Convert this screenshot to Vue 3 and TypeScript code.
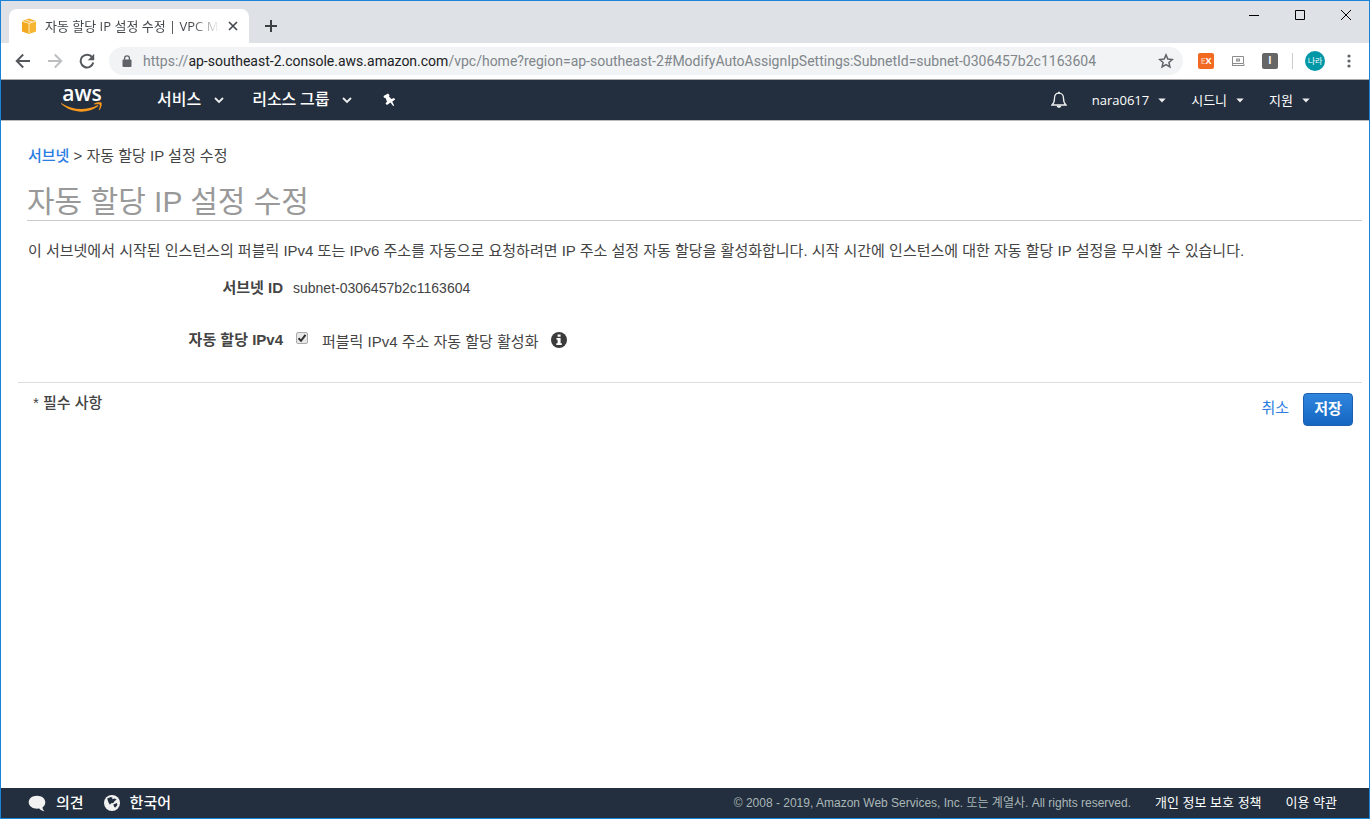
<script setup lang="ts">
import { ref } from 'vue'

interface Menu {
  label: string
}

const pageTitle = '자동 할당 IP 설정 수정'
const subnetId = 'subnet-0306457b2c1163604'
const autoAssign = ref(true)
const mainMenus: Menu[] = [{ label: '서비스' }, { label: '리소스 그룹' }]
const accountMenus: Menu[] = [{ label: 'nara0617' }, { label: '시드니' }, { label: '지원' }]
</script>

<template>
  <div class="window">
    <div class="tabstrip">
      <div class="tab">
        <svg class="favicon" width="16" height="16" viewBox="0 0 16 16" aria-hidden="true">
          <path d="M1 3.2 8 5.4V16L1 13.6z" fill="#f2a81f" />
          <path d="M15 3.2 8 5.4V16l7-2.4z" fill="#f6b532" />
          <path d="M1 3 8 .6 15 3 8 5.2z" fill="#f3b02c" />
          <path d="M1.2 3.2 8 5.3l6.8-2.1M8 5.3V15.6M4.6 1.9l6.9 2.2" stroke="#fde9bd" stroke-width="1" fill="none" />
        </svg>
        <span class="tab-title">{{ pageTitle }} | VPC Ma</span>
        <button class="plain" aria-label="탭 닫기">
          <svg width="10" height="10" viewBox="0 0 10 10"><path d="M1 1l8 8M9 1l-8 8" stroke="#45494d" stroke-width="1.7" /></svg>
        </button>
      </div>
      <button class="plain newtab" aria-label="새 탭">
        <svg width="14" height="14" viewBox="0 0 14 14"><path d="M7 1v12M1 7h12" stroke="#3c4043" stroke-width="2" /></svg>
      </button>
      <div class="window-controls">
        <button class="plain" aria-label="최소화">
          <svg width="12" height="12" viewBox="0 0 12 12"><path d="M1 6.5h10" stroke="#000" /></svg>
        </button>
        <button class="plain" aria-label="최대화">
          <svg width="12" height="12" viewBox="0 0 12 12"><path d="M1.5 1.5h9v9h-9z" stroke="#000" fill="none" /></svg>
        </button>
        <button class="plain" aria-label="닫기">
          <svg width="12" height="12" viewBox="0 0 12 12"><path d="M1 1l10 10M11 1L1 11" stroke="#000" /></svg>
        </button>
      </div>
    </div>

    <div class="toolbar">
      <button class="plain" aria-label="뒤로">
        <svg width="16" height="16" viewBox="0 0 16 16"><path d="M15 8H2M8.2 1.5 1.7 8l6.5 6.5" stroke="#54585d" stroke-width="1.9" fill="none" /></svg>
      </button>
      <button class="plain" aria-label="앞으로">
        <svg width="16" height="16" viewBox="0 0 16 16"><path d="M1 8h13M7.8 1.5 14.3 8l-6.5 6.5" stroke="#bcbec0" stroke-width="1.9" fill="none" /></svg>
      </button>
      <button class="plain" aria-label="새로고침">
        <svg width="16" height="16" viewBox="0 0 16 16">
          <path d="M13.2 4.2A6.4 6.4 0 1 0 14.3 9.6" stroke="#54585d" stroke-width="2" fill="none" />
          <path d="M15.2.8v6.4H8.8z" fill="#54585d" />
        </svg>
      </button>
      <div class="omnibox">
        <svg width="10" height="13" viewBox="0 0 10 13" aria-hidden="true">
          <rect x="0.5" y="4.5" width="9" height="7.5" rx="1" fill="#5f6368" />
          <path d="M2.6 5V3.3a2.4 2.4 0 0 1 4.8 0V5" stroke="#5f6368" stroke-width="1.3" fill="none" />
        </svg>
        <span class="url">https://<b>ap-southeast-2.console.aws.amazon.com</b>/vpc/home?region=ap-southeast-2#ModifyAutoAssignIpSettings:SubnetId=subnet-0306457b2c1163604</span>
        <button class="plain" aria-label="북마크">
          <svg width="16" height="16" viewBox="0 0 16 16"><path d="M8 1.9l1.8 4.2 4.5.4-3.4 3 1 4.4L8 11.6l-3.9 2.3 1-4.4-3.4-3 4.5-.4z" stroke="#5f6368" stroke-width="1.5" fill="none" /></svg>
        </button>
      </div>
      <div class="extensions">
        <button class="plain ext ext-orange"><i>E</i>X</button>
        <button class="plain ext" aria-label="화면 확장 프로그램">
          <svg width="14" height="12" viewBox="0 0 14 12">
            <path d="M1.5 1.5h11v7h-11zM1 10.5h12V8.8M1.5 8v3" stroke="#8b8b8b" fill="none" />
            <path d="M5 3.5h4v3H5z" fill="#8b8b8b" /><path d="M5.5 4l1.5 1.4L8.5 4" stroke="#fff" stroke-width=".6" fill="none" />
          </svg>
        </button>
        <button class="plain ext ext-gray">I</button>
        <span class="divider"></span>
        <button class="plain avatar">나라</button>
        <button class="plain ext" aria-label="메뉴">
          <svg width="4" height="14" viewBox="0 0 4 14" fill="#5f6368"><circle cx="2" cy="2" r="1.6" /><circle cx="2" cy="7" r="1.6" /><circle cx="2" cy="12" r="1.6" /></svg>
        </button>
      </div>
    </div>

    <header class="navbar">
      <a class="logo" href="#" aria-label="AWS">
        <span>aws</span>
        <svg width="42" height="11" viewBox="0 0 42 11" aria-hidden="true">
          <path d="M.6 1.2C10.5 8 25 9 36.3 3.3c1-.5 1.5.4.8 1C28 11.5 11 12 .3 2.1c-.6-.5-.2-1.2.3-.9z" fill="#f8981d" />
          <path d="M33.2 1.5c2.5-1.5 6.5-1.5 7.2-.8.8.8.1 5.3-2 7.4-.4.4-.8.2-.6-.3.6-1.5 1.5-4.3 1-5-.6-.7-3.5-.5-5.1-.4-.6.1-.9-.6-.5-.9z" fill="#f8981d" />
        </svg>
      </a>
      <nav class="main-menu">
        <button v-for="menu in mainMenus" :key="menu.label" class="plain menu-button">
          <span>{{ menu.label }}</span>
          <svg width="10" height="8" viewBox="0 0 10 8"><path d="M1 2l4 4 4-4" stroke="#eee" stroke-width="1.8" fill="none" /></svg>
        </button>
        <button class="plain" aria-label="바로 가기 고정">
          <svg width="18" height="14" viewBox="-3 0 18 14"><path d="M.5 3 5 .5 6.5 2 6 3.5 8.5 6 11 5l1.200 1.500L9.300 8.500l1.800 4-1 .5-2.600-3.500L4 12l-1.500-1.500L4 8.500 2.500 5 1 4.800z" fill="#fff" /></svg>
        </button>
      </nav>
      <div class="account-menu">
        <button class="plain" aria-label="알림">
          <svg width="16" height="18" viewBox="0 0 16 18">
            <path d="M8 2.2c-3 0-4.5 2.2-4.5 5 0 3.5-.8 5.3-2.5 6.8h14c-1.7-1.5-2.5-3.3-2.5-6.8 0-2.8-1.5-5-4.5-5z" stroke="#eee" stroke-width="1.3" fill="none" />
            <path d="M7.1.7h1.8v2H7.1zM5.7 14.5h4.6c0 1.5-1 2.3-2.3 2.3s-2.3-.8-2.3-2.3z" fill="#eee" />
          </svg>
        </button>
        <button v-for="menu in accountMenus" :key="menu.label" class="plain menu-button small">
          <span>{{ menu.label }}</span>
          <svg width="8" height="5" viewBox="0 0 8 5"><path d="M.3.5h7.4L4 4.5z" fill="#eee" /></svg>
        </button>
      </div>
    </header>

    <main>
      <div class="crumbs"><a href="#">서브넷</a> &gt; {{ pageTitle }}</div>
      <h1>{{ pageTitle }}</h1>
      <p class="intro">이 서브넷에서 시작된 인스턴스의 퍼블릭 IPv4 또는 IPv6 주소를 자동으로 요청하려면 IP 주소 설정 자동 할당을 활성화합니다. 시작 시간에 인스턴스에 대한 자동 할당 IP 설정을 무시할 수 있습니다.</p>
      <form @submit.prevent>
        <div class="field">
          <span class="name">서브넷 ID</span>
          <span class="value">{{ subnetId }}</span>
        </div>
        <div class="field auto">
          <span class="name">자동 할당 IPv4</span>
          <div class="choice">
            <input id="auto-assign" v-model="autoAssign" type="checkbox">
            <label for="auto-assign">퍼블릭 IPv4 주소 자동 할당 활성화</label>
            <button type="button" class="plain info" aria-label="정보">
              <svg width="16" height="16" viewBox="0 0 16 16">
                <circle cx="8" cy="8" r="8" fill="#3b3b3b" />
                <path d="M6.6 2.4h3v2.4h-3zM5.5 6h4.1v5.2h1.2v1.9H5.3v-1.9h1.3V7.8H5.5z" fill="#fff" />
              </svg>
            </button>
          </div>
        </div>
        <div class="actions">
          <span class="required">* 필수 사항</span>
          <a href="#">취소</a>
          <button type="submit" class="save">저장</button>
        </div>
      </form>
    </main>

    <footer>
      <button class="plain foot-button">
        <svg width="18" height="17" viewBox="0 0 18 17"><path d="M9 .8c4.7 0 8.3 2.8 8.3 6.5 0 2.2-1 3.9-2.8 5.1.1 1.5.8 2.7 2 3.7-2 .2-4-.8-5.3-2.5C5.5 14.5.7 11.5.7 7.3.7 3.6 4.3.8 9 .8z" fill="#f2f2f2" /></svg>
        <span>의견</span>
      </button>
      <button class="plain foot-button">
        <svg width="16" height="16" viewBox="0 0 16 16">
          <circle cx="8" cy="8" r="8" fill="#f2f2f2" />
          <path d="M3.2 3.4 6.8 2l1.800.8-.5 1.500 2.400-.9 2.200 1.200-2 1.500L9.300 8 7.200 8.300 5.900 9.800 4.300 7zM9.300 9.600l3.600-1.500.5 2-2 2.500-1.100-.5z" fill="#232f3e" />
        </svg>
        <span>한국어</span>
      </button>
      <span class="copyright">© 2008 - 2019, Amazon Web Services, Inc. 또는 계열사. All rights reserved.</span>
      <a href="#">개인 정보 보호 정책</a>
      <a href="#">이용 약관</a>
    </footer>
  </div>
</template>

<style>
body {
  margin: 0;
}
</style>

<style scoped>
* {
  box-sizing: border-box;
}
.window {
  display: flex;
  flex-direction: column;
  min-height: 100vh;
  border: 1px solid #1883d7;
  background: #fff;
  color: #444;
  font: 15px/20px "Liberation Sans", "Noto Sans CJK KR", sans-serif;
}
svg {
  display: block;
  flex: none;
}
.plain {
  display: flex;
  align-items: center;
  justify-content: center;
  flex: none;
  padding: 0;
  border: 0;
  background: none;
  color: inherit;
  font: inherit;
  cursor: pointer;
}
a {
  color: #2a7de1;
  text-decoration: none;
}

.tabstrip {
  display: flex;
  align-items: flex-start;
  height: 42px;
  padding: 8px 0 0 8px;
  background: #dee1e6;
}
.tab {
  display: flex;
  align-items: center;
  gap: 8px;
  width: 240px;
  height: 34px;
  padding: 0 11px 0 12px;
  border-radius: 8px 8px 0 0;
  background: #fff;
}
.tab-title {
  flex: 1;
  min-width: 0;
  overflow: hidden;
  white-space: nowrap;
  color: #45494d;
  font: 13px/18px "Open Sans", "Noto Sans CJK KR", sans-serif;
  mask-image: linear-gradient(to right, #000 84%, transparent);
}
.newtab {
  width: 28px;
  height: 34px;
  margin-left: 8px;
}
.window-controls {
  display: flex;
  margin: -8px 0 0 auto;
}
.window-controls .plain {
  width: 46px;
  height: 28px;
}

.toolbar {
  display: flex;
  align-items: center;
  gap: 16px;
  height: 37px;
  padding: 0 12px 0 14px;
  border-bottom: 1px solid #aaa;
}
.omnibox {
  display: flex;
  align-items: center;
  flex: 1;
  min-width: 0;
  gap: 11px;
  height: 28px;
  margin-left: -2px;
  padding: 0 9px 0 13px;
  border-radius: 14px;
  background: #f1f3f4;
}
.url {
  flex: 1;
  min-width: 0;
  overflow: hidden;
  white-space: nowrap;
  color: #80868b;
  font: 14px/20px Roboto, sans-serif;
}
.url b {
  color: #202124;
  font-weight: 400;
}
.extensions {
  display: flex;
  align-items: center;
  gap: 16px;
  margin-left: -1px;
}
.ext {
  width: 16px;
  height: 16px;
  border-radius: 2px;
}
.ext-orange {
  background: #f26a21;
  color: #fff;
  font: bold 9px/16px "Open Sans", sans-serif;
}
.ext-orange i {
  color: #f9b48f;
  font-style: normal;
}
.ext-gray {
  background: #666;
  color: #fff;
  font: bold 10px/16px "Liberation Sans", sans-serif;
}
.divider {
  width: 1px;
  height: 16px;
  margin: 0 -4px 0 -2px;
  background: #ccc;
}
.avatar {
  width: 20px;
  height: 20px;
  border-radius: 50%;
  background: #0097a7;
  color: #fff;
  font: 8px/20px "Noto Sans CJK KR", sans-serif;
}

.navbar {
  display: flex;
  align-items: center;
  height: 41px;
  padding: 0 59px 0 60px;
  border-bottom: 1px solid #bbb;
  background: #232f3e;
  color: #fff;
}
.logo {
  display: flex;
  flex-direction: column;
  align-items: center;
  width: 42px;
  padding-bottom: 3px;
  color: #fff;
  font: 600 21px/18px "Open Sans", sans-serif;
}
.main-menu {
  display: flex;
  align-items: center;
  gap: 28px;
  margin-left: 54px;
}
.menu-button {
  gap: 13px;
}
.main-menu span {
  padding-bottom: 5px;
  font: 500 16px/20px "Noto Sans CJK KR", sans-serif;
}
.account-menu {
  display: flex;
  align-items: center;
  gap: 25px;
  margin-left: auto;
}
.small {
  gap: 9px;
  font: 13px/20px "Open Sans", "Noto Sans CJK KR", sans-serif;
}

main {
  flex: 1;
  padding: 25px 7px 0 17px;
}
.crumbs,
.intro {
  margin: 0;
  padding-left: 10px;
}
.crumbs a {
  font-weight: 500;
}
h1 {
  margin: 18px 0 0 9px;
  border-bottom: 1px solid #ccc;
  color: #999;
  font-size: 30px;
  font-weight: 400;
  line-height: 36px;
}
.intro {
  margin-top: 20px;
}
.field {
  display: flex;
  gap: 10px;
  margin-top: 17px;
}
.name {
  width: 265px;
  text-align: right;
  font-weight: 700;
}
.value {
  font-size: 14px;
}
.auto {
  margin-top: 32px;
}
.choice {
  display: flex;
  align-items: flex-start;
}
.choice input {
  appearance: none;
  width: 12px;
  height: 12px;
  margin: 2px 14px 0 3px;
  border: 1px solid #aaa;
  border-radius: 2px;
  background: #e8e8e8;
}
.choice input:checked {
  background: #e8e8e8 url("data:image/svg+xml,%3Csvg xmlns='http://www.w3.org/2000/svg' viewBox='0 0 10 10'%3E%3Cpath d='M1.5 5.2l2.5 2.6 4.5-6' stroke='%23333' stroke-width='2' fill='none'/%3E%3C/svg%3E");
}
.choice label {
  padding-top: 2px;
}
.info {
  margin: 2px 0 0 13px;
}
.actions {
  display: flex;
  align-items: flex-start;
  gap: 14px;
  margin-top: 30px;
  padding: 10px 9px 0 15px;
  border-top: 1px solid #ddd;
}
.required {
  flex: 1;
  font-weight: 500;
}
.actions a {
  padding-top: 5px;
}
.save {
  width: 50px;
  height: 33px;
  padding: 0 0 4px;
  border: 1px solid #1c5fae;
  border-radius: 4px;
  background: linear-gradient(#2f86dd, #1566c0);
  color: #fff;
  font: 700 15px/20px "Noto Sans CJK KR", sans-serif;
}

footer {
  display: flex;
  align-items: center;
  height: 30px;
  padding: 0 32px 0 27px;
  background: #232f3e;
  color: #fff;
  font-size: 13px;
}
.foot-button {
  gap: 10px;
  margin-right: 20px;
}
.foot-button span {
  padding-bottom: 2px;
  font: 500 15px/20px "Noto Sans CJK KR", sans-serif;
}
.copyright {
  margin-left: auto;
  color: #aab7b8;
  font-size: 12px;
}
footer a {
  margin-left: 24px;
  color: #fff;
}
</style>
